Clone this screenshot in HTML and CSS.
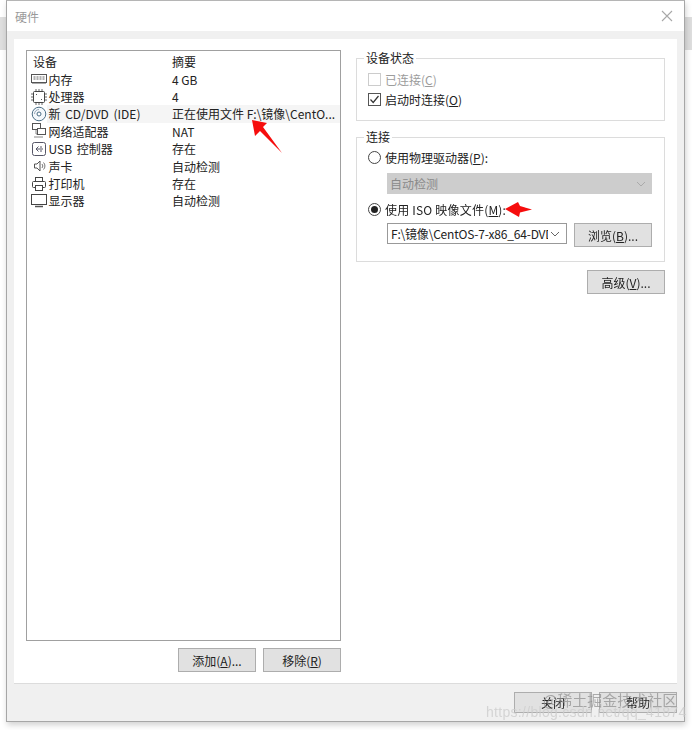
FILE: index.html
```html
<!DOCTYPE html>
<html lang="zh">
<head>
<meta charset="utf-8">
<title>硬件</title>
<link rel="stylesheet" href="styles.css">
</head>
<body>
<div class="desk-strip left"></div>
<div class="desk-strip right"></div>
<div class="window">
  <div class="titlebar">
    <span class="title">硬件</span>
    <svg class="close" width="12" height="12" viewBox="0 0 12 12"><path d="M1 1L11 11M11 1L1 11" stroke="#a8a8a8" stroke-width="1.1" fill="none"/></svg>
  </div>
  <div class="body">
    <div class="panel">
      <div class="left-col">
        <div class="list">
          <div class="row head"><span class="c1 plain">设备</span><span class="c2">摘要</span></div>
          <div class="row"><span class="c1"><svg class="ico" viewBox="0 0 16 16"><rect x="0.5" y="3.5" width="15" height="8" fill="#fff" stroke="#555"/><path d="M2.5 6h2M5.500 6h2M8.500 6h2M11.500 6h2M2.500 8h2M5.500 8h2M8.500 8h2M11.500 8h2" stroke="#666" stroke-width="1.200"/><path d="M1 12.500h14" stroke="#aaa"/></svg>内存</span><span class="c2">4 GB</span></div>
          <div class="row"><span class="c1"><svg class="ico" viewBox="0 0 16 16"><rect x="2.500" y="2.500" width="11" height="11" rx="1" fill="#fff" stroke="#444"/><path d="M0 5h2M0 8h2M0 11h2M14 5h2M14 8h2M14 11h2M5 0v2M8 0v2M11 0v2M5 14v2M8 14v2M11 14v2" stroke="#666"/><path d="M5 5h1v1H5zM10 10h1v1h-1z" fill="#555"/></svg>处理器</span><span class="c2">4</span></div>
          <div class="row selected"><span class="c1"><svg class="ico" viewBox="0 0 16 16"><circle cx="8" cy="8" r="6.800" fill="#f4f8fb" stroke="#4a6d85"/><circle cx="8" cy="8" r="2" fill="#fff" stroke="#4a6d85"/><path d="M3.500 8a4.500 4.500 0 0 1 4.500-4.500" stroke="#9ab" fill="none"/></svg>新 CD/DVD (IDE)</span><span class="c2">正在使用文件 F:\镜像\CentO...</span></div>
          <div class="row"><span class="c1"><svg class="ico" viewBox="0 0 16 16"><rect x="1.500" y="0.500" width="8" height="6" fill="#fff" stroke="#555"/><rect x="6.500" y="5.500" width="8" height="6" fill="#fff" stroke="#555"/><path d="M5 7v4h1M3 14h9" stroke="#888" fill="none"/></svg>网络适配器</span><span class="c2">NAT</span></div>
          <div class="row"><span class="c1"><svg class="ico" viewBox="0 0 16 16"><rect x="1.500" y="1.500" width="13" height="13" rx="2" fill="#fff" stroke="#556"/><path d="M12 8H5M5 8l2.500-2.500M5 8l2.500 2.500M9 6h2M9 10h2" stroke="#556" fill="none"/></svg>USB 控制器</span><span class="c2">存在</span></div>
          <div class="row"><span class="c1"><svg class="ico" viewBox="0 0 16 16"><path d="M3.500 6H6l3-3v10l-3-3H3.500z" fill="#fff" stroke="#555"/><path d="M11 6a3 3 0 0 1 0 4M12.500 4.500a5 5 0 0 1 0 7" stroke="#777" fill="none"/></svg>声卡</span><span class="c2">自动检测</span></div>
          <div class="row"><span class="c1"><svg class="ico" viewBox="0 0 16 16"><rect x="4.500" y="1.500" width="7" height="4" fill="#fff" stroke="#444"/><rect x="1.500" y="5.500" width="13" height="6" rx="1" fill="#fff" stroke="#444"/><rect x="4.500" y="9.500" width="7" height="5" fill="#fff" stroke="#444"/></svg>打印机</span><span class="c2">存在</span></div>
          <div class="row"><span class="c1"><svg class="ico" viewBox="0 0 16 16"><rect x="0.500" y="1.500" width="15" height="10" fill="#fff" stroke="#444"/><path d="M4 13.500h8" stroke="#555" stroke-width="1.500"/></svg>显示器</span><span class="c2">自动检测</span></div>
        </div>
        <div class="list-actions">
          <button class="btn">添加(<u>A</u>)...</button>
          <button class="btn">移除(<u>R</u>)</button>
        </div>
      </div>
      <div class="right-col">
        <fieldset class="group status">
          <legend>设备状态</legend>
          <div class="opt disabled"><span class="check off"></span>已连接(<u>C</u>)</div>
          <div class="opt"><span class="check"><svg width="13" height="13" viewBox="0 0 13 13"><path d="M2.500 6.500L5.200 9.500L10.500 3" stroke="#333" stroke-width="1.200" fill="none"/></svg></span>启动时连接(<u>O</u>)</div>
        </fieldset>
        <fieldset class="group connect">
          <legend>连接</legend>
          <div class="opt"><span class="radio"></span>使用物理驱动器(<u>P</u>):</div>
          <div class="select grey"><span>自动检测</span><svg width="10" height="6" viewBox="0 0 10 6"><path d="M1 1l4 4 4-4" stroke="#aaa" fill="none"/></svg></div>
          <div class="opt iso"><span class="radio on"></span><span class="wide">使用 ISO 映像文件(<u>M</u>):</span>
            <svg class="arrow-left" width="27" height="15" viewBox="0 0 27 15"><path d="M0 7L13 0L15 4L27 7.500L15 10.500L14 15Z" fill="#f60d0d"/></svg>
          </div>
          <div class="path-row">
            <div class="select path"><span class="path-text">F:\镜像\CentOS-7-x86_64-DVD</span><svg width="10" height="6" viewBox="0 0 10 6"><path d="M1 1l4 4 4-4" stroke="#666" fill="none"/></svg></div>
            <button class="btn browse">浏览(<u>B</u>)...</button>
          </div>
        </fieldset>
        <div class="adv-row"><button class="btn">高级(<u>V</u>)...</button></div>
      </div>
    </div>
    <div class="footer">
      <button class="btn foot">关闭</button>
      <button class="btn foot">帮助</button>
    </div>
  </div>
</div>
<svg class="arrow-main" width="31" height="34" viewBox="0 0 31 34"><path d="M0 0L15 3L11 7L30 33L8 11L3 16Z" fill="#f60d0d"/></svg>
<div class="mark-a">@稀土掘金技术社区</div>
<div class="mark-b">https://blog.csdn.net/qq_41874</div>
</body>
</html>
```
FILE: styles.css
```css
* { box-sizing: border-box; }
html, body { margin: 0; height: 730px; overflow: hidden; background: #fff; }
body {
  position: relative;
  font-family: "Noto Sans CJK SC", "Liberation Sans", sans-serif;
  font-size: 12px;
  color: #222;
  padding: 0 7px 8px 6px;
}
.desk-strip { position: absolute; background: #dedede; top: 17px; height: 33px; width: 7px; }
.desk-strip.left { left: 0; }
.desk-strip.right { right: 0; width: 8px; }
.window {
  height: 722px;
  border: 1px solid #a6a6a6;
  border-top-color: #b5b5b5;
  background: #f0f0f0;
  box-shadow: 1px 3px 6px rgba(0,0,0,.18);
  display: flex;
  flex-direction: column;
  filter: blur(.3px);
}
.titlebar {
  height: 30px;
  background: #fff;
  display: flex;
  align-items: center;
  justify-content: space-between;
  padding: 0 11px 0 8px;
  flex: none;
}
.title { color: #9a9a9a; font-size: 12px; }
.body { flex: 1; display: flex; flex-direction: column; padding: 8px 7px 0 7px; min-height: 0; }
.panel {
  height: 645px;
  background: #fff;
  border-bottom: 1px solid #dcdcdc;
  flex: none;
  display: flex;
  padding: 11px 12px 0 12px;
  gap: 15px;
}
.left-col { width: 315px; flex: none; display: flex; flex-direction: column; }
.list {
  height: 591px;
  border: 1px solid #a0a0a0;
  padding: 2px 0 0 0;
  flex: none;
}
.row { height: 17.4px; display: flex; align-items: center; line-height: 17px; white-space: nowrap; }
.row.head { height: 17.5px; }
.row.selected { background: #f5f5f5; margin-left: 20px; }
.row.selected .c1 { margin-left: -20px; width: 145px; }
.c1 { width: 145px; padding-left: 4px; display: flex; align-items: center; flex: none; word-spacing: 2px; }
.c1.plain { padding-left: 6px; }
.c2 { padding-left: 0; }
.ico { width: 16px; height: 16px; margin-right: 1.5px; flex: none; }
.list-actions { display: flex; justify-content: flex-end; gap: 7px; margin-top: 7px; }
.btn {
  width: 78px;
  height: 24px;
  background: #e1e1e1;
  border: 1px solid #adadad;
  font: inherit;
  color: #222;
  padding: 0;
  display: inline-flex;
  align-items: center;
  justify-content: center;
  white-space: pre;
}
.right-col { flex: 1; min-width: 0; padding-top: 8px; display: flex; flex-direction: column; }
.group {
  margin: 0;
  padding: 0 0 0 11px;
  border: 1px solid #dcdcdc;
  min-width: 0;
}
.group legend { padding: 0 2px; margin-left: -4px; line-height: 14px; height: 14px; }
.status { height: 70px; margin-top: -7px; }
.connect { height: 132px; margin-top: 9px; }
.opt { display: flex; align-items: center; height: 20px; }
.opt.disabled { color: #9c9c9c; }
.status .opt:first-of-type { margin-top: 4px; }
.check {
  width: 13px; height: 13px; border: 1px solid #555; margin-right: 4px; flex: none;
  display: flex; align-items: center; justify-content: center; background: #fff;
}
.check svg { flex: none; }
.check.off { border-color: #ccc; }
.radio {
  width: 13px; height: 13px; border: 1px solid #444; border-radius: 50%;
  margin-right: 4px; flex: none; background: #fff; position: relative;
}
.radio.on::after {
  content: ""; position: absolute; left: 2px; top: 2px; width: 7px; height: 7px;
  border-radius: 50%; background: #222;
}
.connect .opt { margin-top: 3px; }
.select {
  height: 21px;
  margin-left: 19px;
  display: flex;
  align-items: center;
  justify-content: space-between;
  padding: 0 6px 0 3px;
}
.select.grey { width: 265px; background: #cdcdcd; color: #8a8a8a; margin-top: 6px; }
.connect .opt.iso { margin-top: 5px; position: relative; }
.wide { letter-spacing: .2px; }
.arrow-left { margin-left: -1px; margin-top: 1px; }
.path-row { display: flex; align-items: flex-start; gap: 7px; margin-top: 4px; margin-left: 19px; }
.select.path {
  width: 180px;
  margin-left: 0;
  background: #fff;
  border: 1px solid #999;
  flex: none;
}
.path-text { width: 157px; overflow: hidden; white-space: nowrap; letter-spacing: -.2px; }
.btn.browse { height: 24px; width: 78px; }
.adv-row { display: flex; justify-content: flex-end; margin-top: 8px; }
.footer { display: flex; justify-content: flex-end; gap: 7px; padding: 8px 0 0 0; }
.btn.foot { height: 21px; width: 78px; }
.arrow-main { position: absolute; left: 252px; top: 120px; }
.mark-a { position: absolute; left: 543px; top: 691px; font-size: 15px; color: rgba(140,140,140,.7); line-height: 18px; white-space: nowrap; }
.mark-b { position: absolute; left: 486px; top: 704px; font-size: 14px; color: rgba(205,205,205,.8); line-height: 16px; white-space: nowrap; letter-spacing: .3px; font-family: "Liberation Sans", sans-serif; }
```
